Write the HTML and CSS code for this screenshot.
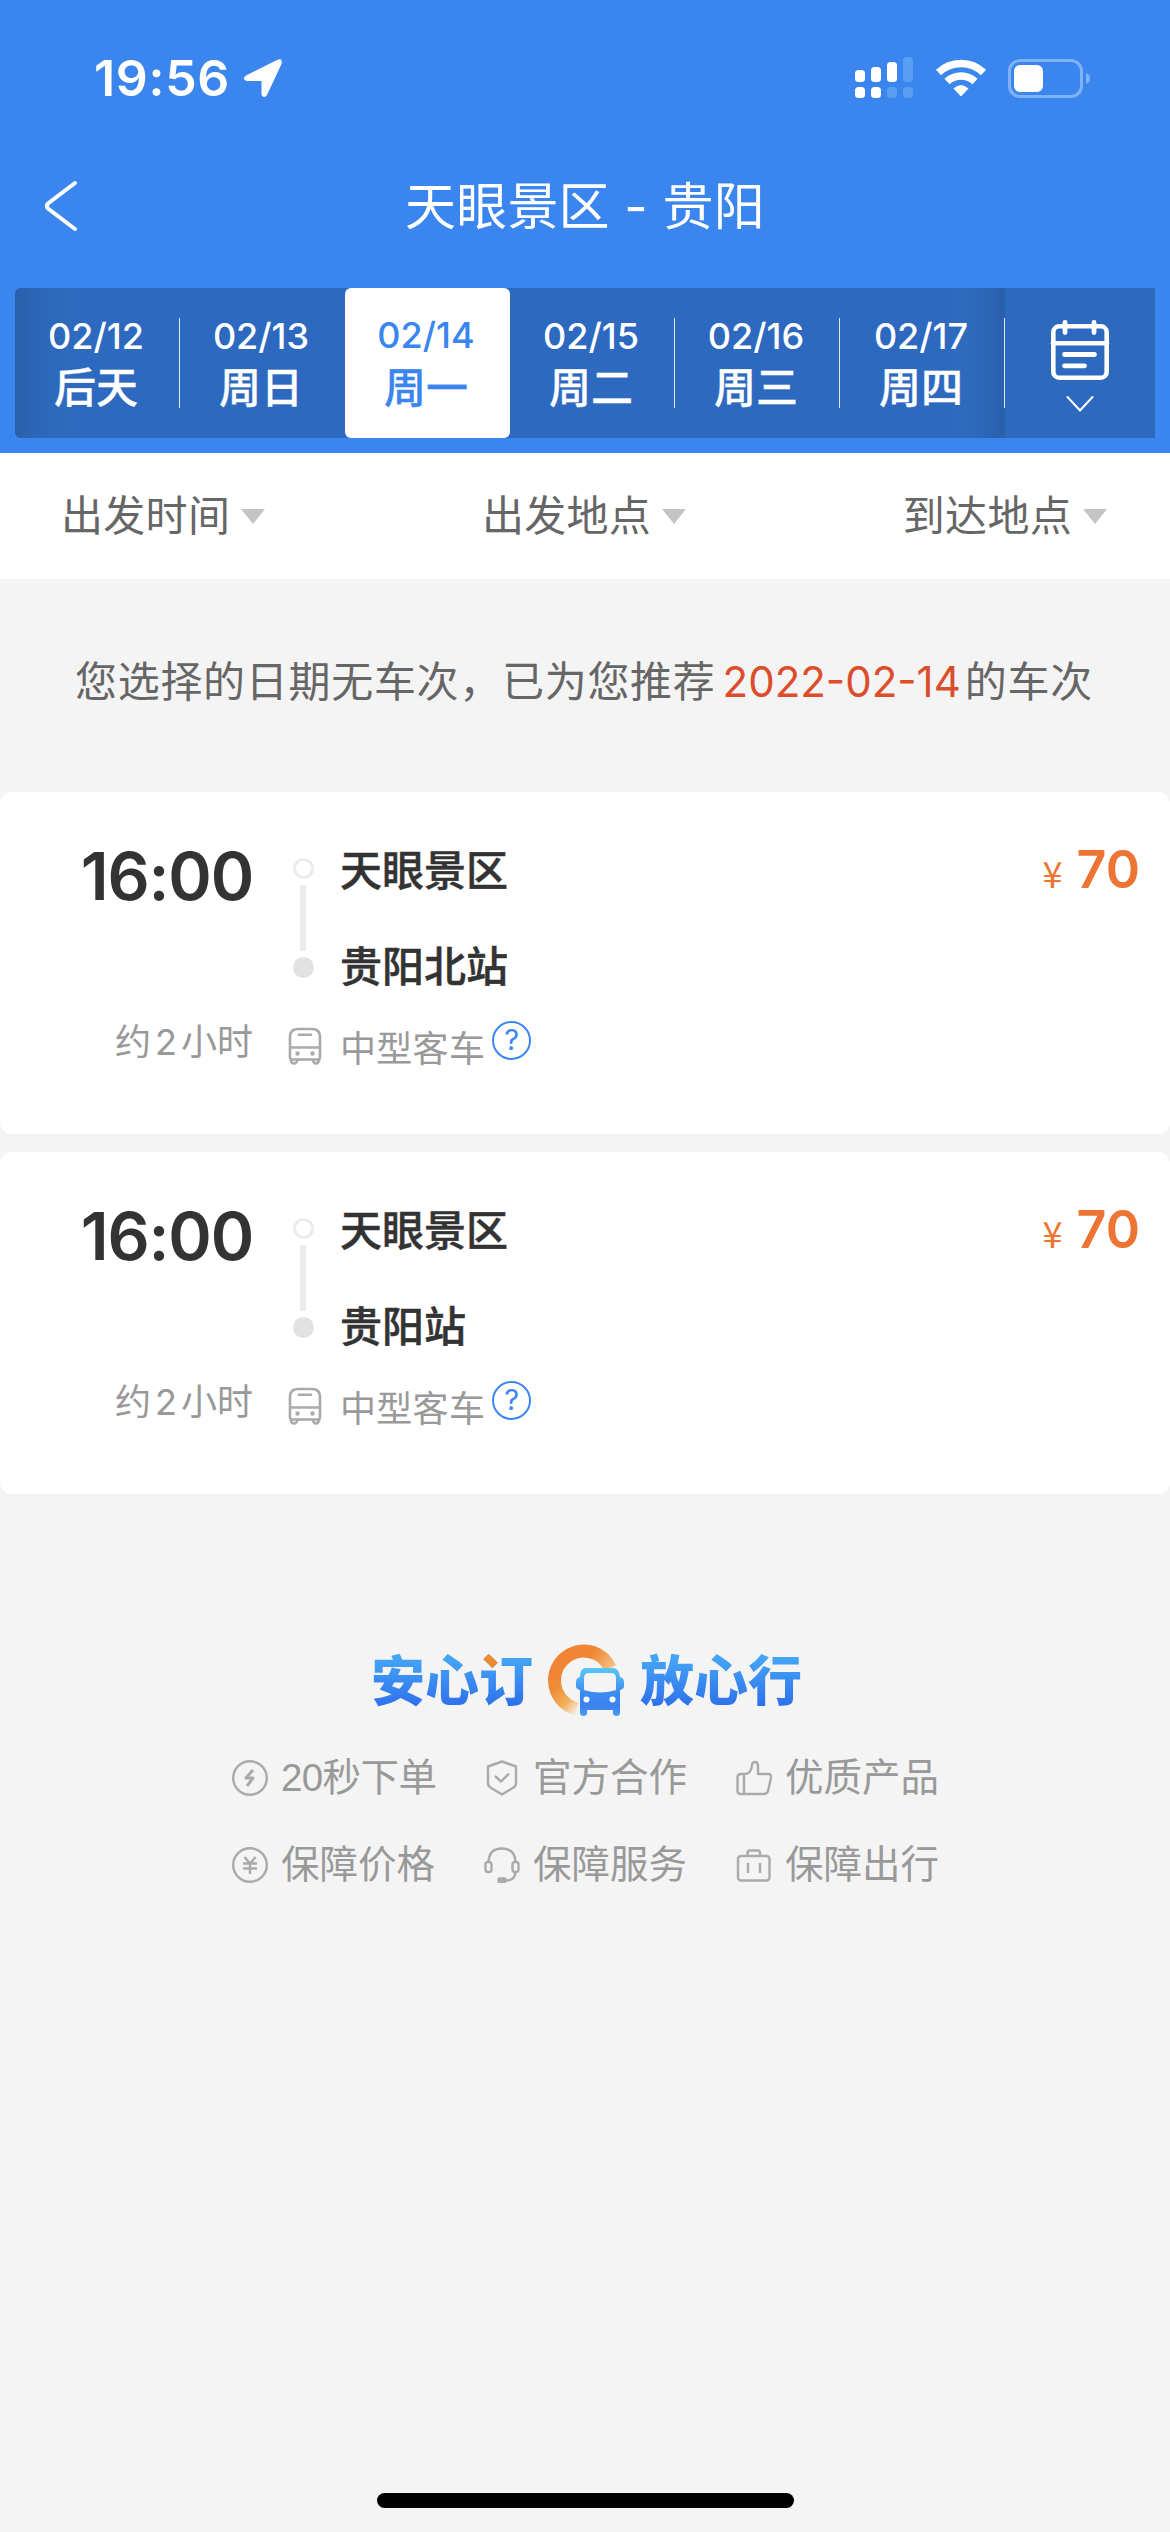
FILE: index.html
```html
<!DOCTYPE html>
<html lang="zh-CN">
<head>
<meta charset="utf-8">
<title>天眼景区 - 贵阳</title>
<link rel="stylesheet" href="styles.css">
</head>
<body>
<header class="header">
  <div class="status">
    <span class="clock">19:56</span>
    <svg class="location" width="40" height="40" viewBox="0 0 40 40"><path d="M3 17.500L34 2Q40 -0.500 38.500 6L24 37Q21 41 18.500 37V23H4Q-2 21.500 3 17.500Z" fill="#fff"/></svg>
    <svg class="signal" width="58" height="42" viewBox="0 0 58 42">
      <g fill="#fff"><rect y="13" width="10" height="12" rx="3.500"/><rect x="16" y="10" width="10" height="15" rx="3.500"/><rect x="32" y="5" width="10" height="20" rx="3.500"/><rect y="30" width="10" height="11" rx="3.500"/><rect x="16" y="30" width="10" height="11" rx="3.500"/></g>
      <g fill="#589ff4"><rect x="48" width="10" height="25" rx="3.500"/><rect x="32" y="30" width="10" height="11" rx="3.500"/><rect x="48" y="30" width="10" height="11" rx="3.500"/></g>
    </svg>
    <svg class="wifi" width="52" height="38" viewBox="0 0 52 38">
      <path d="M3.500 13.500A32.500 32.500 0 0 1 48.500 13.500" fill="none" stroke="#fff" stroke-width="7.500"/>
      <path d="M12 22.500A20.500 20.500 0 0 1 40 22.500" fill="none" stroke="#fff" stroke-width="7.500"/>
      <path d="M18.500 29.500Q26 22.500 33.500 29.500L27 36.500Q26 37.500 25 36.500Z" fill="#fff"/>
    </svg>
    <svg class="battery" width="83" height="39" viewBox="0 0 83 39">
      <rect x="1.500" y="1.500" width="72" height="36" rx="10.500" fill="none" stroke="#80b3f5" stroke-width="3"/>
      <rect x="6" y="6" width="29" height="27" rx="6" fill="#fff"/>
      <path d="M78 14Q82 15.500 82 19.500T78 25Z" fill="#80b3f5"/>
    </svg>
  </div>
  <div class="nav">
    <svg class="back" width="34" height="52" viewBox="0 0 34 52"><path d="M31 3L4 23.500Q1.500 26 4 28.500L31 49" fill="none" stroke="#fff" stroke-width="4" stroke-linecap="round"/></svg>
    <h1 class="title">天眼景区 - 贵阳</h1>
  </div>
  <nav class="dates">
    <div class="days">
      <a class="day"><span class="md">02/12</span><span class="week">后天</span></a>
      <a class="day before-selected"><span class="md">02/13</span><span class="week">周日</span></a>
      <a class="day selected"><span class="md">02/14</span><span class="week">周一</span></a>
      <a class="day"><span class="md">02/15</span><span class="week">周二</span></a>
      <a class="day"><span class="md">02/16</span><span class="week">周三</span></a>
      <a class="day"><span class="md">02/17</span><span class="week">周四</span></a>
    </div>
    <a class="calendar">
      <svg width="60" height="92" viewBox="0 0 60 92" fill="none" stroke="#fff" stroke-linecap="round">
        <rect x="3.300" y="6.300" width="53.400" height="51.400" rx="6" stroke-width="4.600"/>
        <path d="M3 23.300H57" stroke-width="4.600"/>
        <path d="M15 2.500V12.500M44 2.500V12.500M14.500 34.500H44.500M14.500 45.800H34.500" stroke-width="4.800"/>
        <path d="M17.500 77L30 90.500L42.500 77" stroke-width="2"/>
      </svg>
    </a>
  </nav>
</header>

<div class="filters">
  <span class="filter">出发时间<i class="caret"></i></span>
  <span class="filter">出发地点<i class="caret"></i></span>
  <span class="filter">到达地点<i class="caret"></i></span>
</div>

<p class="notice">您选择的日期无车次，已为您推荐<span class="notice-date">2022-02-14</span>的车次</p>

<main class="trips">
  <article class="trip">
    <div class="when"><div class="depart">16:00</div><div class="duration">约<span class="num">2</span>小时</div></div>
    <div class="track">
      <i class="dot hollow"></i><i class="line"></i><i class="dot"></i>
      <svg class="bus" width="34" height="38" viewBox="0 0 34 38" fill="none" stroke="#aaa" stroke-width="2.600"><path d="M2 30V10Q2 2 10 2H24Q32 2 32 10V30Q32 32.500 30 32.500H4Q2 32.500 2 30ZM2 20.500H32M3 32V33.500Q3.500 36.500 6 36.500T9.500 33M24.500 33Q26 36.500 28 36.500T31 33.500V32"/><path d="M11 7.800H23" stroke-linecap="round"/><circle cx="9.500" cy="26.500" r="1.500" fill="#aaa" stroke-width="1.500"/><circle cx="24.500" cy="26.500" r="1.500" fill="#aaa" stroke-width="1.500"/></svg>
    </div>
    <div class="route">
      <div class="station">天眼景区</div><div class="station">贵阳北站</div>
      <div class="type">中型客车<span class="help">?</span></div>
    </div>
    <div class="price"><span class="yen">¥</span>70</div>
  </article>
  <article class="trip">
    <div class="when"><div class="depart">16:00</div><div class="duration">约<span class="num">2</span>小时</div></div>
    <div class="track">
      <i class="dot hollow"></i><i class="line"></i><i class="dot"></i>
      <svg class="bus" width="34" height="38" viewBox="0 0 34 38" fill="none" stroke="#aaa" stroke-width="2.600"><path d="M2 30V10Q2 2 10 2H24Q32 2 32 10V30Q32 32.500 30 32.500H4Q2 32.500 2 30ZM2 20.500H32M3 32V33.500Q3.500 36.500 6 36.500T9.500 33M24.500 33Q26 36.500 28 36.500T31 33.500V32"/><path d="M11 7.800H23" stroke-linecap="round"/><circle cx="9.500" cy="26.500" r="1.500" fill="#aaa" stroke-width="1.500"/><circle cx="24.500" cy="26.500" r="1.500" fill="#aaa" stroke-width="1.500"/></svg>
    </div>
    <div class="route">
      <div class="station">天眼景区</div><div class="station">贵阳站</div>
      <div class="type">中型客车<span class="help">?</span></div>
    </div>
    <div class="price"><span class="yen">¥</span>70</div>
  </article>
</main>

<footer class="promise">
  <div class="slogan">
    <span class="word book">安心订</span>
    <svg class="emblem" width="78" height="74" viewBox="0 0 78 74">
      <defs>
        <linearGradient id="bus" x1="0" y1="0" x2="0" y2="1"><stop offset="0" stop-color="#5cc6f6"/><stop offset=".5" stop-color="#3b8df0"/><stop offset=".8" stop-color="#3c80ef"/><stop offset="1" stop-color="#4ba0f5"/></linearGradient>
        <linearGradient id="tailTop" gradientUnits="userSpaceOnUse" x1="48" y1="8" x2="68" y2="25"><stop offset="0" stop-color="#f08a35"/><stop offset="1" stop-color="#f5c98f"/></linearGradient>
        <linearGradient id="tailLow" gradientUnits="userSpaceOnUse" x1="8" y1="44" x2="32" y2="68"><stop offset="0" stop-color="#f08c35"/><stop offset=".55" stop-color="#f2b05d"/><stop offset="1" stop-color="#f4f4f4"/></linearGradient>
      </defs>
      <path d="M7.500 37A29.500 29.500 0 0 1 47 8.800" fill="none" stroke="#f08535" stroke-width="13"/>
      <path d="M46 8.400A29.500 29.500 0 0 1 63 24" fill="none" stroke="url(#tailTop)" stroke-width="13"/>
      <path d="M7.500 36A29.500 29.500 0 0 0 30 65" fill="none" stroke="url(#tailLow)" stroke-width="13"/>
      <path fill="url(#bus)" d="M39 24H66Q72 24 73 33Q77 34 77 38V42Q77 45 73 46V69Q73 72 69.500 72T66 69V66H40V69Q40 72 36.500 72T33 69V46Q29 45 29 42V38Q29 34 33 33Q33 24 39 24Z"/>
      <path d="M42 29H64Q69 29 69 34V46Q53 51 37 46V34Q37 29 42 29Z" fill="#f4f4f4"/>
      <circle cx="39.500" cy="55.500" r="3" fill="#fff"/><circle cx="65.500" cy="55.500" r="3" fill="#fff"/>
    </svg>
    <span class="word">放心行</span>
  </div>
  <div class="features">
    <div class="feature"><svg class="ficon" viewBox="0 0 36 36"><circle cx="18" cy="18" r="16.800"/><path d="M21 10L14 18H21L15 26" stroke-width="3"/></svg><span class="latin">20秒下单</span></div>
    <div class="feature"><svg class="ficon" viewBox="0 0 36 36"><path d="M18 1.500L32 6.500V23Q32 26 29.500 27.500L18 34.500L6.500 27.500Q4 26 4 23V6.500ZM11 16L17 21.500L25 13.500"/></svg>官方合作</div>
    <div class="feature"><svg class="ficon" viewBox="0 0 36 36"><path d="M8 14H5Q1.500 14 1.500 17.500V31Q1.500 34 5 34H28Q31 34 32 31L35 18Q35.500 14 32 14H22V6Q22 2 19 2Q16.500 2 16 5Q15.500 14 8 14ZM8 14V34"/></svg>优质产品</div>
    <div class="feature"><svg class="ficon" viewBox="0 0 36 36"><circle cx="18" cy="18" r="16.800"/><path d="M12.500 10L18 16.500L23.500 10M11 16.500H25M11 21.500H25M18 16.500V27"/></svg>保障价格</div>
    <div class="feature"><svg class="ficon" viewBox="0 0 36 36"><path d="M4.500 15Q5 1.500 18 1.500T31.500 15M31.500 25Q31 33.500 22 33.500"/><rect x="1.500" y="15" width="6" height="10" rx="2.500"/><rect x="28.500" y="15" width="6" height="10" rx="2.500"/><rect x="14.500" y="31.500" width="7" height="3.500" rx="1" fill="#aaa"/></svg>保障服务</div>
    <div class="feature"><svg class="ficon" viewBox="0 0 36 36"><rect x="2" y="9" width="31.500" height="24.500" rx="3"/><path d="M11.500 9V6Q11.500 3.500 14 3.500H21.500Q24 3.500 24 6V9M12 16V26M24 16V26"/></svg>保障出行</div>
  </div>
</footer>
<div class="home-indicator"></div>
</body>
</html>
```
FILE: styles.css
```css
* { box-sizing: border-box; }
body {
  margin: 0;
  width: 1170px;
  height: 2532px;
  overflow: hidden;
  display: flex;
  flex-direction: column;
  background: #f4f4f4;
  color: #333;
  font-family: Inter, "Noto Sans CJK SC", sans-serif;
}
svg { display: block; flex: none; }
i { display: block; }

.header { height: 453px; background: #3a85ee; color: #fff; }
.status { height: 132px; padding: 24px 79px 0 94px; display: flex; align-items: center; }
.clock { width: 149px; font-size: 50px; line-height: 60px; font-weight: 600; letter-spacing: 0.7px; }
.location { margin-right: auto; }
.signal { margin-right: 22px; }
.wifi { margin-right: 21px; }
.nav { height: 156px; padding: 0 44px 8px; display: flex; align-items: center; }
.title {
  flex: 1;
  margin: 2px 34px 0 0;
  text-align: center;
  font-size: 51px;
  line-height: 60px;
  font-weight: 400;
  letter-spacing: 0.2px;
}
.dates {
  display: flex;
  width: 1140px;
  height: 150px;
  margin-left: 15px;
  background: #2d69bf;
  border-radius: 6px 0 0 6px;
}
.days {
  display: flex;
  width: 990px;
  border-radius: 6px 0 0 6px;
  background: linear-gradient(90deg, #2a60ab 0, #2c66b6 20px, #2e6bbd 50px, transparent 75px, transparent 925px, #2e6bbd 952px, #2c66b6 972px, #2a60ab 990px);
}
.day {
  width: 165px;
  padding: 25px 3px 0 0;
  display: flex;
  flex-direction: column;
  align-items: center;
  background: linear-gradient(#dfe9f7, #dfe9f7) right 30px / 1px 90px no-repeat;
}
.before-selected { background: none; }
.selected { background: #fff; color: #3a85ee; border-radius: 6px; }
.md { font-size: 36px; line-height: 46px; font-weight: 500; }
.week { margin-top: 7px; font-size: 42px; line-height: 44px; font-weight: 500; -webkit-text-stroke: 0.3px currentColor; }
.selected .md { margin-top: -1px; margin-bottom: 1px; }
.calendar { flex: 1; padding: 32px 0 0 45px; }

.filters {
  height: 126px;
  padding: 0 63px 0 61px;
  display: flex;
  justify-content: space-between;
  align-items: center;
  background: #fff;
  color: #666;
  font-size: 42px;
}
.filter { display: flex; align-items: center; line-height: 50px; letter-spacing: 0.3px; }
.caret {
  margin-left: 11px;
  border: solid transparent;
  border-width: 15px 12.5px 0;
  border-top-color: #c4c4c4;
}

.notice {
  margin: 0;
  height: 213px;
  padding-left: 75px;
  white-space: nowrap;
  font-size: 42px;
  line-height: 205px;
  letter-spacing: 0.7px;
  color: #666;
}
.notice-date { margin: 0 4px 0 7px; color: #db4d2b; letter-spacing: 0; }

.trips { display: flex; flex-direction: column; gap: 18px; }
.trip { height: 342px; display: flex; background: #fff; border-radius: 12px; }
.when { width: 253px; padding-top: 51px; text-align: right; white-space: nowrap; }
.depart { font-size: 66px; line-height: 66px; font-weight: 600; letter-spacing: -1.2px; }
.duration { margin-top: 113px; font-size: 36px; line-height: 40px; color: #999; }
.num { margin: 0 4px; }
.track { width: 52px; margin-left: 35px; padding-top: 66px; display: flex; flex-direction: column; }
.dot { width: 21px; height: 21px; margin-left: 5px; border-radius: 50%; background: #e2e2e2; }
.hollow { background: none; border: 3px solid #ebebeb; }
.line { width: 6px; height: 66px; margin: 6px 0 6px 12px; background: #ebebeb; }
.bus { margin-top: 49px; }
.route { padding-top: 58px; }
.station { height: 42px; margin-bottom: 54px; font-size: 42px; line-height: 42px; font-weight: 500; -webkit-text-stroke: 0.5px currentColor; }
.type {
  margin-top: -13px;
  height: 40px;
  display: flex;
  align-items: center;
  font-size: 36px;
  line-height: 40px;
  color: #999;
  letter-spacing: 0.3px;
}
.help {
  width: 39px;
  height: 39px;
  margin: 0 0 18px 7px;
  border: 2.5px solid #3b87f2;
  border-radius: 50%;
  color: #3b87f2;
  text-align: center;
  font-size: 29px;
  line-height: 34px;
}
.price {
  margin-left: auto;
  padding: 48px 30px 0 0;
  color: #ee7433;
  font-size: 52px;
  line-height: 60px;
  font-weight: 600;
}
.yen { margin-right: 14px; font-family: "Noto Sans CJK SC", sans-serif; font-size: 36px; font-weight: 400; }

.promise { padding-top: 150px; }
.slogan { height: 74px; padding-left: 371px; display: flex; align-items: center; white-space: nowrap; }
.word {
  width: 163px;
  margin-top: -6px;
  font-family: "Noto Sans CJK SC", sans-serif;
  font-size: 54px;
  line-height: 66px;
  font-weight: 900;
  color: transparent;
  background: linear-gradient(#45a6f6 12px, #2e6feb 62px);
  -webkit-background-clip: text;
  background-clip: text;
}
.book {
  background-image: radial-gradient(circle at 119px 17px, #f08a30 8px, transparent 8.5px), linear-gradient(#45a6f6 12px, #2e6feb 62px);
}
.emblem { margin: 0 15px 0 13px; }
.features {
  padding: 35px 0 0 232px;
  display: grid;
  grid-template-columns: 252px 252px 252px;
  row-gap: 37px;
  color: #999;
}
.feature {
  display: flex;
  align-items: center;
  gap: 13px;
  font-family: "Liberation Sans", "Noto Sans CJK SC", sans-serif;
  font-size: 38.5px;
  line-height: 50px;
}
.latin { letter-spacing: -0.6px; }
.ficon { width: 36px; height: 36px; fill: none; stroke: #aaa; stroke-width: 2.4; stroke-linejoin: round; }

.home-indicator {
  width: 417px;
  height: 15px;
  margin: auto auto 24px;
  border-radius: 8px;
  background: #000;
}
```
